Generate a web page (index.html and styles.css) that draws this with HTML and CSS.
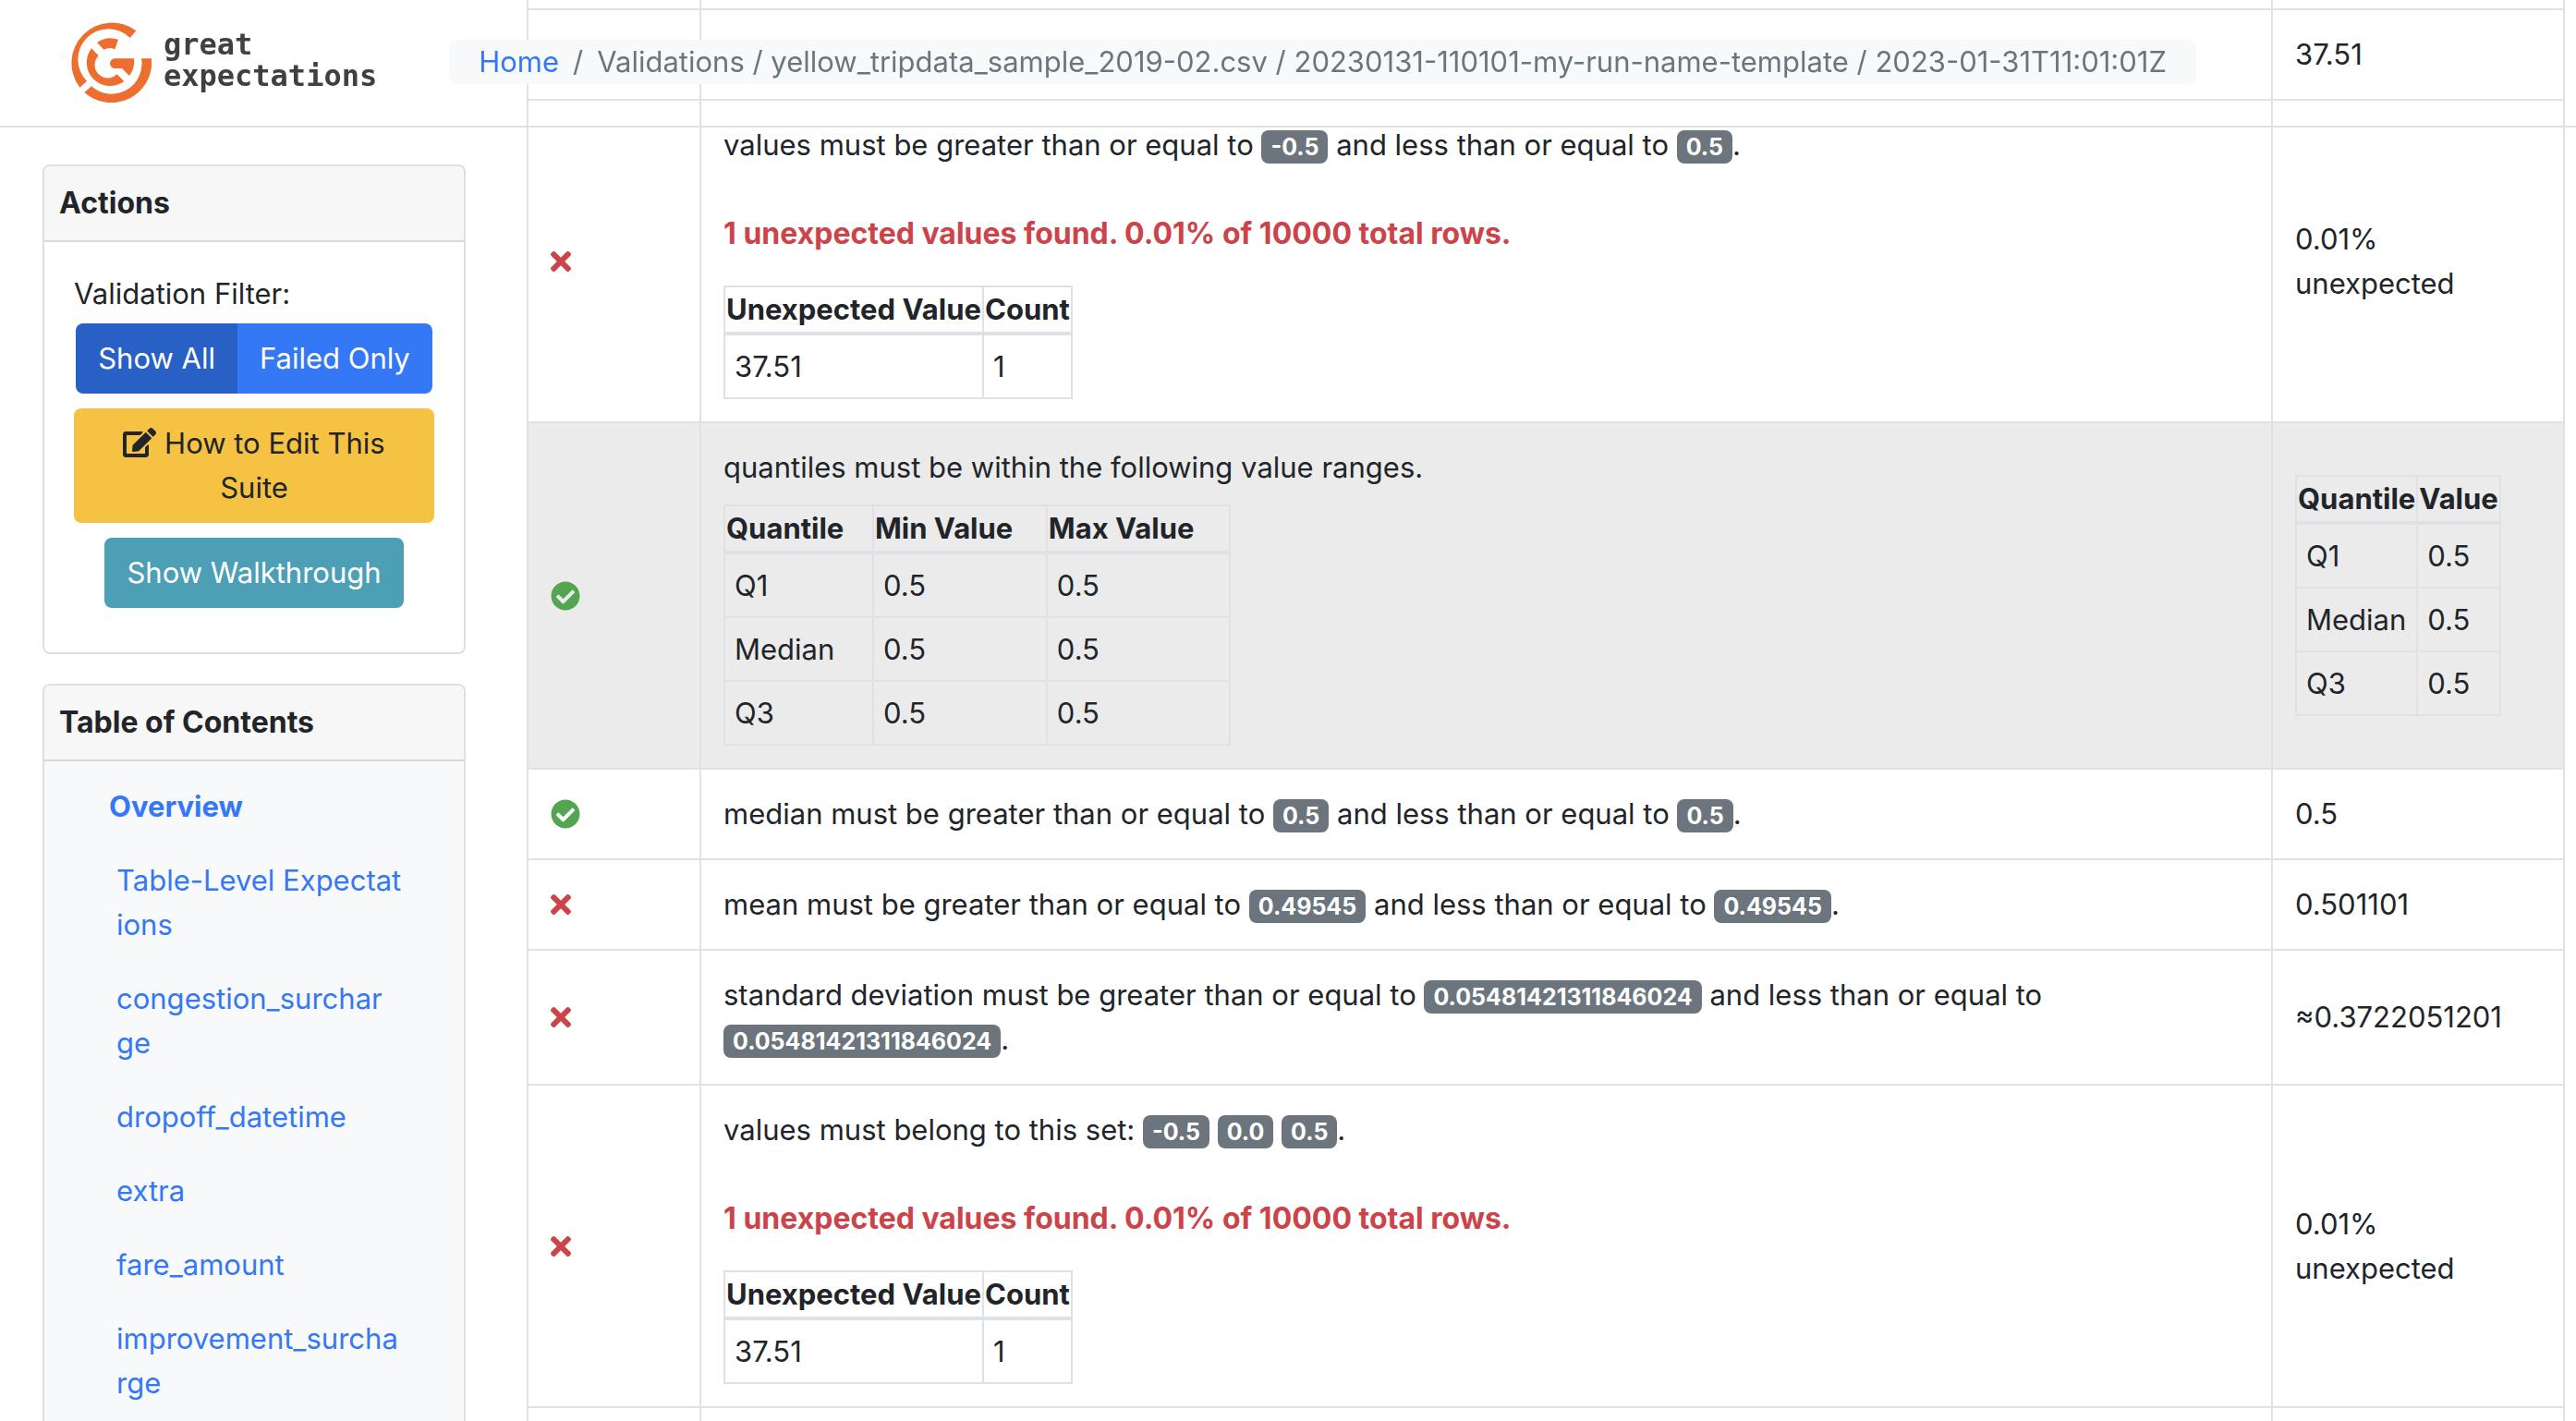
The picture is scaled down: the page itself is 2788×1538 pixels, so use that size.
FILE: index.html
```html
<!DOCTYPE html>
<html lang="en">
<head>
<meta charset="utf-8">
<meta name="viewport" content="width=device-width, initial-scale=1">
<title>Validations / yellow_tripdata_sample_2019-02.csv</title>
<link rel="stylesheet" href="styles.css">
</head>
<body>
<svg class="sprite" aria-hidden="true">
  <symbol id="times" viewBox="0 0 352 512"><path d="M242.72 256l100.07-100.07c12.28-12.28 12.28-32.19 0-44.48l-22.24-22.24c-12.28-12.28-32.19-12.28-44.48 0L176 189.28 75.93 89.21c-12.28-12.28-32.19-12.28-44.48 0L9.21 111.45c-12.28 12.28-12.28 32.19 0 44.48L109.28 256 9.21 356.07c-12.28 12.28-12.28 32.19 0 44.48l22.24 22.24c12.28 12.28 32.2 12.28 44.48 0L176 322.72l100.07 100.07c12.28 12.28 32.2 12.28 44.48 0l22.24-22.24c12.28-12.28 12.28-32.19 0-44.48L242.72 256z"/></symbol>
  <symbol id="check" viewBox="0 0 512 512"><path d="M504 256c0 136.967-111.033 248-248 248S8 392.967 8 256 119.033 8 256 8s248 111.033 248 248zM227.314 387.314l184-184c6.248-6.248 6.248-16.379 0-22.627l-22.627-22.627c-6.248-6.249-16.379-6.249-22.628 0L216 308.118l-70.059-70.059c-6.248-6.248-16.379-6.248-22.628 0l-22.627 22.627c-6.248 6.248-6.248 16.379 0 22.627l104 104c6.249 6.249 16.379 6.249 22.628.001z"/></symbol>
</svg>

<header class="navbar">
  <a class="brand" href="#">
    <svg class="brand-mark" viewBox="51 39 264 264" aria-hidden="true">
      <path d="M265 70A131 131 0 0 0 82 254L105 233A98 98 0 0 1 245 93Z"/>
      <path d="M97 270A131 131 0 0 0 315 160H282A98 98 0 0 1 120 250Z"/>
      <path d="M138 108A76 76 0 0 1 207 98L196 130A42 42 0 0 0 160 131Z"/>
      <path d="M120 127A76 76 0 0 0 226 234L203 211A42 42 0 0 1 143 151Z"/>
      <path d="M195 160H258A76 76 0 0 1 243 216L219 192H197A16 16 0 0 1 195 160Z"/>
    </svg>
    <span class="brand-name">great<br>expectations</span>
  </a>
  <nav class="breadcrumb" aria-label="breadcrumb">
    <a href="#">Home</a>
    <span class="crumb-sep">/</span>
    <span>Validations / yellow_tripdata_sample_2019-02.csv / 20230131-110101-my-run-name-template / 2023-01-31T11:01:01Z</span>
  </nav>
</header>

<div class="layout">
  <aside class="sidebar">
    <section class="card">
      <h2 class="card-header">Actions</h2>
      <div class="actions">
        <p class="filter-label" id="filter-label">Validation Filter:</p>
        <div class="btn-group" role="group" aria-labelledby="filter-label">
          <button class="btn btn-primary active" type="button">Show All</button>
          <button class="btn btn-primary" type="button">Failed Only</button>
        </div>
        <button class="btn btn-warning" type="button"><svg class="edit-icon" viewBox="0 0 576 512" aria-hidden="true"><path d="M402.6 83.2l90.2 90.2c3.8 3.8 3.8 10 0 13.8L274.4 405.600l-92.800 10.300c-12.400 1.400-22.900-9.100-21.500-21.500l10.300-92.800L388.800 83.200c3.800-3.800 10-3.800 13.800 0zm162-22.900l-48.800-48.800c-15.200-15.200-39.900-15.200-55.200 0l-35.400 35.400c-3.800 3.800-3.800 10 0 13.800l90.200 90.200c3.800 3.800 10 3.800 13.800 0l35.400-35.400c15.200-15.300 15.200-40 0-55.200zM384 346.200V448H64V128h229.800c3.200 0 6.200-1.300 8.500-3.500l40-40c7.600-7.600 2.200-20.500-8.500-20.500H48C21.500 64 0 85.500 0 112v352c0 26.500 21.500 48 48 48h352c26.500 0 48-21.500 48-48V306.200c0-10.700-12.900-16-20.500-8.500l-40 40c-2.200 2.300-3.500 5.300-3.500 8.500z"/></svg> How to Edit This Suite</button>
        <button class="btn btn-info" type="button">Show Walkthrough</button>
      </div>
    </section>

    <section class="card card-toc">
      <h2 class="card-header">Table of Contents</h2>
      <nav class="toc">
        <a class="toc-top" href="#">Overview</a>
        <a href="#">Table-Level Expectat<wbr>ions</a>
        <a href="#">congestion_surchar<wbr>ge</a>
        <a href="#">dropoff_datetime</a>
        <a href="#">extra</a>
        <a href="#">fare_amount</a>
        <a href="#">improvement_surcha<wbr>rge</a>
      </nav>
    </section>
  </aside>

  <main class="content">
    <table class="results">
      <colgroup><col class="col-status"><col><col class="col-observed"></colgroup>
      <tbody>
        <tr class="row-cut"><td></td><td></td><td></td></tr>
        <tr><td></td><td></td><td>37.51</td></tr>
        <tr>
          <td><svg class="fail" role="img" aria-label="Failed"><use href="#times"/></svg></td>
          <td>
            <p>values must be greater than or equal to <span class="badge">-0.5</span> and less than or equal to <span class="badge">0.5</span>.</p>
            <p class="unexpected">1 unexpected values found. 0.01% of 10000 total rows.</p>
            <table class="inner">
              <thead><tr><th>Unexpected Value</th><th>Count</th></tr></thead>
              <tbody><tr><td>37.51</td><td>1</td></tr></tbody>
            </table>
          </td>
          <td>0.01% unexpected</td>
        </tr>
        <tr class="shaded">
          <td><svg class="pass" role="img" aria-label="Passed"><use href="#check"/></svg></td>
          <td>
            <p>quantiles must be within the following value ranges.</p>
            <table class="inner inner-ranges">
              <thead><tr><th>Quantile</th><th>Min Value</th><th>Max Value</th></tr></thead>
              <tbody>
                <tr><td>Q1</td><td>0.5</td><td>0.5</td></tr>
                <tr><td>Median</td><td>0.5</td><td>0.5</td></tr>
                <tr><td>Q3</td><td>0.5</td><td>0.5</td></tr>
              </tbody>
            </table>
          </td>
          <td>
            <table class="inner">
              <thead><tr><th>Quantile</th><th>Value</th></tr></thead>
              <tbody>
                <tr><td>Q1</td><td>0.5</td></tr>
                <tr><td>Median</td><td>0.5</td></tr>
                <tr><td>Q3</td><td>0.5</td></tr>
              </tbody>
            </table>
          </td>
        </tr>
        <tr>
          <td><svg class="pass" role="img" aria-label="Passed"><use href="#check"/></svg></td>
          <td><p>median must be greater than or equal to <span class="badge">0.5</span> and less than or equal to <span class="badge">0.5</span>.</p></td>
          <td>0.5</td>
        </tr>
        <tr>
          <td><svg class="fail" role="img" aria-label="Failed"><use href="#times"/></svg></td>
          <td><p>mean must be greater than or equal to <span class="badge">0.49545</span> and less than or equal to <span class="badge">0.49545</span>.</p></td>
          <td>0.501101</td>
        </tr>
        <tr>
          <td><svg class="fail" role="img" aria-label="Failed"><use href="#times"/></svg></td>
          <td><p>standard deviation must be greater than or equal to <span class="badge">0.05481421311846024</span> and less than or equal to <span class="badge">0.05481421311846024</span>.</p></td>
          <td>≈0.3722051201</td>
        </tr>
        <tr>
          <td><svg class="fail" role="img" aria-label="Failed"><use href="#times"/></svg></td>
          <td>
            <p>values must belong to this set: <span class="badge">-0.5</span> <span class="badge">0.0</span> <span class="badge">0.5</span>.</p>
            <p class="unexpected">1 unexpected values found. 0.01% of 10000 total rows.</p>
            <table class="inner">
              <thead><tr><th>Unexpected Value</th><th>Count</th></tr></thead>
              <tbody><tr><td>37.51</td><td>1</td></tr></tbody>
            </table>
          </td>
          <td>0.01% unexpected</td>
        </tr>
        <tr><td></td><td></td><td></td></tr>
      </tbody>
    </table>
  </main>
</div>
</body>
</html>
```
FILE: styles.css
```css
:root {
  --text: #212529;
  --muted: #6c757d;
  --line: #dee2e6;
  --card-line: #dfdfdf;
  --blue: #3478f6;
  --red: #cb444a;
  --green: #53a551;
}

* { box-sizing: border-box; }

body {
  margin: 0;
  background: #fff;
  color: var(--text);
  font-family: Inter, "Liberation Sans", sans-serif;
  font-size: 31px;
  line-height: 48px;
}

h2, p { margin: 0; font-size: inherit; }
a { color: var(--blue); text-decoration: none; }
.sprite { display: none; }

/* Top bar floats over the scrolled report */
.navbar {
  position: fixed;
  inset: 0 0 auto 0;
  z-index: 10;
  display: flex;
  align-items: center;
  gap: 78px;
  height: 138px;
  padding: 0 76px 2px;
  border-bottom: 2px solid var(--line);
}

.brand { display: flex; align-items: center; gap: 13px; color: #404041; }
.brand-mark { width: 88px; height: 88px; fill: #ed6e2f; }
.brand-name {
  padding-bottom: 4px;
  font: bold 32px/34px "DejaVu Sans Mono", "Liberation Mono", monospace;
}

.breadcrumb {
  display: flex;
  padding: 0 32px;
  border-radius: 8px;
  background: #f8f9fa;
  color: var(--muted);
  white-space: nowrap;
}
.crumb-sep { padding: 0 15px; }

.layout {
  display: grid;
  grid-template-columns: 458px minmax(0, 1fr);
  column-gap: 66px;
  height: 100vh;
  padding: 0 12px 0 46px;
  overflow: hidden;
}

.sidebar {
  display: flex;
  flex-direction: column;
  gap: 32px;
  padding-top: 178px;
}

.card { border: 2px solid var(--card-line); border-radius: 8px; }
.card-header {
  padding: 16px;
  border-bottom: 2px solid #d9d9d9;
  border-radius: 6px 6px 0 0;
  background: #f7f7f7;
  font-size: 32px;
  font-weight: 700;
}
.card-toc { flex: 1 0 auto; border-bottom: 0; border-radius: 8px 8px 0 0; background: #f8f9fa; }

.actions {
  display: flex;
  flex-direction: column;
  align-items: center;
  gap: 16px;
  padding: 32px 32px 48px;
}
.filter-label { align-self: stretch; margin-bottom: -8px; }

.btn {
  padding: 14px 24px;
  border: 0;
  border-radius: 8px;
  color: #fff;
  font: inherit;
}
.btn-group { display: flex; }
.btn-group .btn { white-space: nowrap; }
.btn-primary { background: var(--blue); }
.btn-primary.active { background: #2960c5; }
.btn-group .btn:first-child { border-radius: 8px 0 0 8px; }
.btn-group .btn:last-child { border-radius: 0 8px 8px 0; }
.btn-warning { background: #f5c244; color: var(--text); }
.btn-info { background: #4c9fb5; }
.edit-icon { width: 36px; height: 32px; vertical-align: -4px; fill: currentColor; }

.toc {
  display: flex;
  flex-direction: column;
  gap: 32px;
  padding: 25px 64px 16px 78px;
}
.toc-top { margin-left: -8px; font-weight: 700; }

table { border-collapse: collapse; }

.results { width: 100%; table-layout: fixed; }
.col-status { width: 187px; }
.col-observed { width: 316px; }
.results > tbody > tr > td { padding: 24px; border: 2px solid var(--line); vertical-align: middle; }
.results > tbody > tr { height: 98px; }
.results > tbody > .row-cut { height: 10px; }
.results > tbody > .row-cut > td { padding: 0; border-top: 0; }
.shaded { background: #ebebeb; }

.fail, .pass { display: block; height: 32px; }
.fail { width: 22px; fill: var(--red); }
.pass { width: 32px; fill: var(--green); }

.badge {
  display: inline-block;
  padding: 6px 10px;
  border-radius: 8px;
  background: var(--muted);
  color: #fff;
  font-size: 25px;
  font-weight: 700;
  line-height: 24px;
}

.unexpected { margin: 48px 0 32px; color: var(--red); font-size: 32px; font-weight: 700; }

.inner th, .inner td { border: 2px solid var(--line); text-align: left; }
.inner th { padding: 0 1px; border-bottom-width: 4px; font-weight: 700; white-space: nowrap; }
.inner td { padding: 10px 10px 9px; }
.inner-ranges { width: 549px; margin-top: 16px; }
```
